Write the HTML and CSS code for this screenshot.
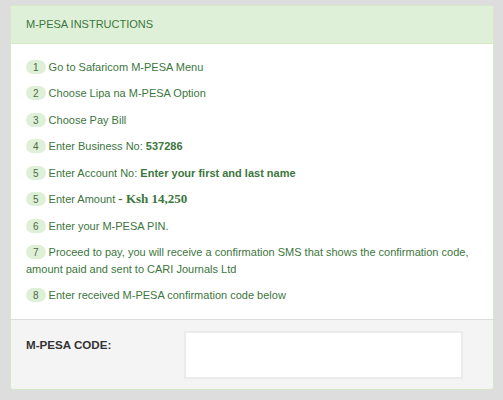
FILE: index.html
```html
<!DOCTYPE html>
<html lang="en">
<head>
	<meta charset="UTF-8">
	<title>M-PESA payment</title>

	<link rel="stylesheet" href="styles.css">
</head>
<body>

	<div class="panel">
		<div class="panel-heading">M-PESA Instructions</div>

		<div class="panel-body">
			<p><span class="step">1</span> Go to Safaricom M-PESA Menu</p>
			<p><span class="step">2</span> Choose Lipa na M-PESA Option</p>
			<p><span class="step">3</span> Choose Pay Bill</p>
			<p><span class="step">4</span> Enter Business No: <b>537286</b></p>
			<p><span class="step">5</span> Enter Account No: <b>Enter your first and last name</b></p>
			<p><span class="step">5</span> Enter Amount <b class="amount">- Ksh 14,250</b></p>
			<p><span class="step">6</span> Enter your M-PESA PIN.</p>
			<p><span class="step">7</span> Proceed to pay, you will receive a confirmation SMS that shows the confirmation code, amount paid and sent to CARI Journals Ltd</p>
			<p><span class="step">8</span> Enter received M-PESA confirmation code below</p>
		</div>

		<div class="panel-footer">
			<label for="code">M-PESA CODE:</label>
			<input type="text" id="code">
		</div>
	</div>

</body>
</html>
```

FILE: styles.css
```css
body {
	font-family: "Liberation Sans", Arial, sans-serif;
	background: #dddddd;
	margin: 0;
	padding: 5px 9px 0 10px;
}

.panel {
	background: #fff;
	border: 1px solid #d6e9c6;
	border-radius: 4px;
	overflow: hidden;
}

.panel-heading {
	background: #dff0d8;
	color: #3c763d;
	border-bottom: 1px solid #d6e9c6;
	padding: 10px 15px;
	font-size: 11px;
	line-height: 16.5px;
	text-transform: uppercase;
}

.panel-body {
	padding: 15px;
	color: #3c763d;
	font-size: 11px;
	line-height: 16.5px;
}

.panel-body p {
	margin: 0 0 10px;
}

.panel-body p:last-child {
	margin-bottom: 0;
}

.step {
	display: inline-block;
	background: #dff0d8;
	color: #4b6b47;
	font-size: 10px;
	line-height: 11px;
	padding: 2px 7px 1px;
	border-radius: 10px;
}

.amount {
	font-family: "Liberation Serif", "Times New Roman", serif;
	font-size: 13px;
	line-height: 1;
}

.panel-footer {
	background: #f4f4f4;
	border-top: 1px solid #dddddd;
	padding: 11px 15px 10px;
	display: grid;
	grid-template-columns: 158px 279px;
	align-items: start;
}

.panel-footer label {
	color: #333;
	font-weight: bold;
	font-size: 11.6px;
	line-height: 17px;
	padding-top: 5px;
}

.panel-footer input {
	box-sizing: border-box;
	height: 48px;
	width: 279px;
	border: 2px solid #ebebeb;
	background: #fff;
	margin: 0;
	outline: none;
}
```
